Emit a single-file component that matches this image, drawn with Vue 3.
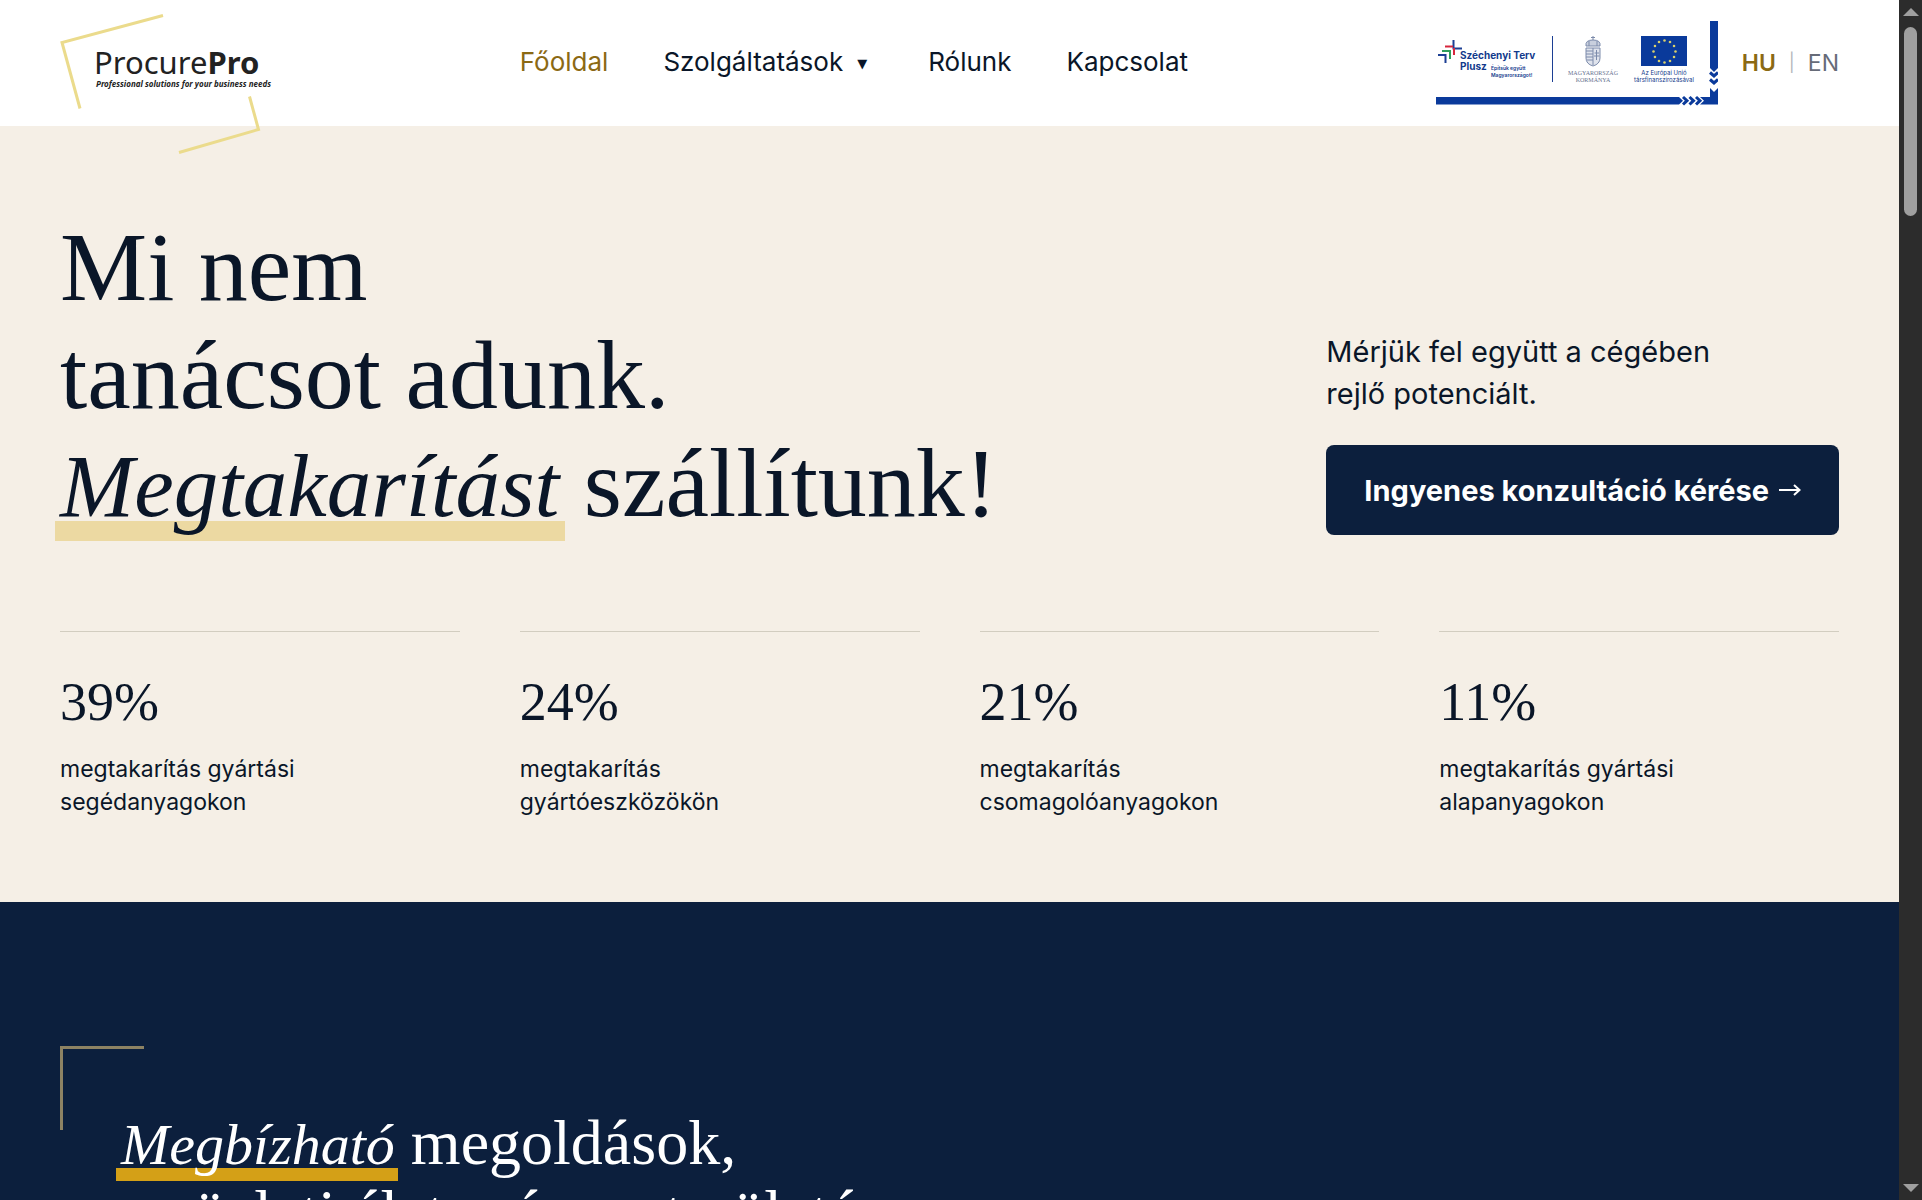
<script setup>
const links = [
  { label: 'Főoldal', active: true },
  { label: 'Szolgáltatások', menu: true },
  { label: 'Rólunk' },
  { label: 'Kapcsolat' },
]

const stats = [
  { value: '39%', lines: ['megtakarítás gyártási', 'segédanyagokon'] },
  { value: '24%', lines: ['megtakarítás', 'gyártóeszközökön'] },
  { value: '21%', lines: ['megtakarítás', 'csomagolóanyagokon'] },
  { value: '11%', lines: ['megtakarítás gyártási', 'alapanyagokon'] },
]

// Twelve stars on a circle around the flag's centre
const stars = Array.from({ length: 12 }, (_, i) => {
  const a = (i * Math.PI) / 6
  return { x: 228.5 + 11 * Math.sin(a), y: 31.5 - 11 * Math.cos(a) }
})
</script>

<template>
  <div class="window">
    <div class="page">
      <header class="header">
        <a class="brand" href="#" aria-label="ProcurePro">
          <svg viewBox="0 0 212 126" width="212" height="126">
            <g fill="none" stroke="#ebdb8c" stroke-width="3">
              <path d="M103 15.500L2 42.500L20 108.500" />
              <path d="M189.500 96.500L198.500 129.500L119 152.500" />
            </g>
            <text class="brand-name" x="34" y="74">Procure<tspan class="brand-bold">Pro</tspan></text>
            <text class="brand-tag" x="36" y="87">Professional solutions for your business needs</text>
          </svg>
        </a>

        <nav class="nav">
          <a v-for="l in links" :key="l.label" href="#" :class="{ active: l.active }">
            {{ l.label }}<span v-if="l.menu" class="caret">▼</span>
          </a>
        </nav>

        <div class="tools">
          <svg class="fund" viewBox="0 0 282 86" width="282" height="86" role="img" aria-label="Széchenyi Terv Plusz">
            <g fill="none" stroke-width="2">
              <path d="M17.500 20V28.500H26" stroke="#1c3f94" />
              <path d="M9 26.500H17" stroke="#d7263d" />
              <path d="M18 28V35" stroke="#d7263d" />
              <path d="M6 31H14V39" stroke="#2e9e5b" />
              <path d="M2 35H9.500V43" stroke="#1c3f94" />
            </g>
            <g fill="#123a8c" class="fund-sans">
              <text x="24" y="39" class="plan">Széchenyi Terv</text>
              <text x="24" y="50" class="plan">Plusz</text>
              <text x="55" y="50" class="small">Építsük együtt</text>
              <text x="55" y="57" class="small">Magyarországot!</text>
              <text x="228" y="55" class="tiny" text-anchor="middle">Az Európai Unió</text>
              <text x="228" y="62" class="tiny" text-anchor="middle">társfinanszírozásával</text>
            </g>
            <path d="M116.500 16V62" stroke="#1c3f94" />
            <g fill="#68738f" class="fund-serif" text-anchor="middle">
              <text x="157" y="55">MAGYARORSZÁG</text>
              <text x="157" y="62">KORMÁNYA</text>
            </g>
            <g fill="none" stroke="#7c8bab">
              <path d="M157 16V20M155 17.500H159" />
              <path d="M150 26Q149 20 157 20Q165 20 164 26Z" fill="#c8cfdd" />
              <path d="M150 28H164V38Q164 44 157 46Q150 44 150 38Z" fill="#dfe3ec" />
              <path d="M157 28V45M150 31H157M150 34H157M150 37H157M151 40H157M160.500 30V40M158.500 33H163M158 36H163.500" />
              <path d="M153 21V26M161 21V26" />
            </g>
            <rect x="205" y="16" width="46" height="30" fill="#0a3a9b" />
            <circle v-for="(s, i) in stars" :key="i" :cx="s.x" :cy="s.y" r="1.300" fill="#d9d06a" />
            <path d="M0 77H243L247 80.700L243 84.500H0Z" fill="#0a3a9b" />
            <path d="M274 1H282V48L278 52L274 48ZM274 68L278 72L282 68V84.500H264L268 80.700L264 77H274Z" fill="#0a3a9b" />
            <g fill="none" stroke="#0a3a9b" stroke-width="3">
              <path d="M274 52.500L278 56L282 52.500M274 59.500L278 63L282 59.500" />
              <path d="M247 77L251 80.700L247 84.500M253.500 77L257.500 80.700L253.500 84.500M260 77L264 80.700L260 84.500" />
            </g>
          </svg>
          <div class="langs">
            <a href="#" class="current">HU</a>
            <span class="bar">|</span>
            <a href="#">EN</a>
          </div>
        </div>
      </header>

      <section class="hero">
        <div class="hero-top">
          <h1>Mi nem<br />tanácsot adunk.<br /><em>Megtakarítást</em> szállítunk!</h1>
          <div class="cta">
            <p>Mérjük fel együtt a cégében<br />rejlő potenciált.</p>
            <button type="button">
              Ingyenes konzultáció kérése
              <svg viewBox="0 0 22 14" width="22" height="14" fill="none" stroke="#fff" stroke-width="2">
                <path d="M0 7H20M15 2L20.500 7L15 12" />
              </svg>
            </button>
          </div>
        </div>
        <div class="stats">
          <div v-for="s in stats" :key="s.value" class="stat">
            <div class="value">{{ s.value }}</div>
            <p>{{ s.lines[0] }}<br />{{ s.lines[1] }}</p>
          </div>
        </div>
      </section>

      <section class="about">
        <div class="framed">
          <h2><em>Megbízható</em> megoldások,<br />az üzleti élet számos területén</h2>
        </div>
      </section>
    </div>

    <div class="scrollbar" aria-hidden="true">
      <svg viewBox="0 0 16 8" width="16" height="8"><path d="M0 8L8 0L16 8Z" fill="#9f9f9f" /></svg>
      <div class="track"><div class="thumb"></div></div>
      <svg viewBox="0 0 16 8" width="16" height="8"><path d="M0 0L8 8L16 0Z" fill="#9f9f9f" /></svg>
    </div>
  </div>
</template>

<style>
body {
  margin: 0;
}
</style>

<style scoped>
*,
*::before,
*::after {
  box-sizing: border-box;
}
.window {
  display: flex;
  height: 100vh;
  overflow: hidden;
  font-family: Inter, "Liberation Sans", sans-serif;
  color: #0a1628;
}
.page {
  flex: 1;
  min-width: 0;
}
a {
  color: inherit;
  text-decoration: none;
}
h1,
h2,
p {
  margin: 0;
}
h1,
h2,
.value {
  font-family: "Liberation Serif", serif;
  font-weight: 400;
}

.header {
  display: flex;
  justify-content: space-between;
  align-items: center;
  height: 126px;
  padding: 0 60px;
  background: #fff;
}
.brand {
  display: block;
  height: 126px;
}
.brand svg {
  display: block;
  position: relative;
  overflow: visible;
}
.brand-name {
  font: 400 31px "Noto Sans", sans-serif;
  fill: #222;
}
.brand-bold {
  font-weight: 700;
}
.brand-tag {
  font: italic 700 8px "Noto Sans", sans-serif;
  fill: #222;
}
.nav {
  display: flex;
  gap: 55px;
  font-size: 26px;
  line-height: 36px;
}
.active,
.current {
  color: #8b6914;
}
.caret {
  margin: 0 6px 0 14px;
  font-family: "DejaVu Sans", sans-serif;
  font-size: 13px;
  vertical-align: 3px;
}
.tools {
  display: flex;
  align-items: center;
  gap: 24px;
}
.fund {
  display: block;
}
.fund-sans {
  font-family: Inter, sans-serif;
}
.plan {
  font-size: 10px;
  font-weight: 700;
}
.tiny {
  font-size: 6px;
}
.small {
  font-size: 5px;
  font-weight: 600;
}
.fund-serif {
  font: 6px "Liberation Serif", serif;
}
.langs {
  display: flex;
  gap: 13px;
  font-size: 23px;
  line-height: 36px;
  color: #666b78;
}
.current {
  font-weight: 600;
}
.bar {
  font-size: 18px;
  color: #b4b7bd;
}

.hero {
  padding: 87px 60px 83px;
  background: #f5efe6;
}
.hero-top {
  display: flex;
  justify-content: space-between;
  align-items: flex-end;
}
h1 {
  font-size: 98px;
  line-height: 108px;
}
em {
  position: relative;
  z-index: 0;
  line-height: 1;
}
em::after {
  content: "";
  position: absolute;
  z-index: -1;
}
h1 em {
  font-size: 89px;
}
h1 em::after {
  left: -5px;
  right: -6px;
  bottom: -6px;
  height: 20px;
  background: #ecd9a2;
}
.cta {
  padding-bottom: 2px;
}
.cta p {
  font-size: 29px;
  line-height: 42px;
}
.cta button {
  display: flex;
  align-items: center;
  gap: 10px;
  height: 90px;
  margin-top: 30px;
  padding: 0 38px;
  border: 0;
  border-radius: 8px;
  background: #0c1f3d;
  color: #fff;
  font: 700 29px Inter, "Liberation Sans", sans-serif;
}
.stats {
  display: grid;
  grid-template-columns: repeat(4, 1fr);
  gap: 60px;
  margin-top: 94px;
}
.stat {
  padding-top: 40px;
  border-top: 1px solid #d2cdc0;
}
.value {
  font-size: 54px;
  line-height: 60px;
}
.stat p {
  margin-top: 21px;
  font-size: 23px;
  line-height: 33px;
}

.about {
  min-height: 400px;
  padding: 144px 60px;
  background: #0c1f3d;
  color: #fff;
}
.framed {
  position: relative;
  padding: 62px 61px;
}
.framed::before {
  content: "";
  position: absolute;
  top: 0;
  left: 0;
  width: 84px;
  height: 84px;
  border: 3px solid #8d8263;
  border-width: 3px 0 0 3px;
}
h2 {
  font-size: 64px;
  line-height: 70px;
}
h2 em {
  font-size: 58px;
}
h2 em::after {
  left: -5px;
  right: -3px;
  bottom: -4px;
  height: 13px;
  background: #d4a017;
}

.scrollbar {
  display: flex;
  flex-direction: column;
  align-items: center;
  width: 23px;
  padding: 8px 0;
  background: #2c2c2c;
}
.track {
  flex: 1;
  padding-top: 11px;
}
.thumb {
  width: 13px;
  height: 189px;
  border-radius: 7px;
  background: #9f9f9f;
}
</style>
